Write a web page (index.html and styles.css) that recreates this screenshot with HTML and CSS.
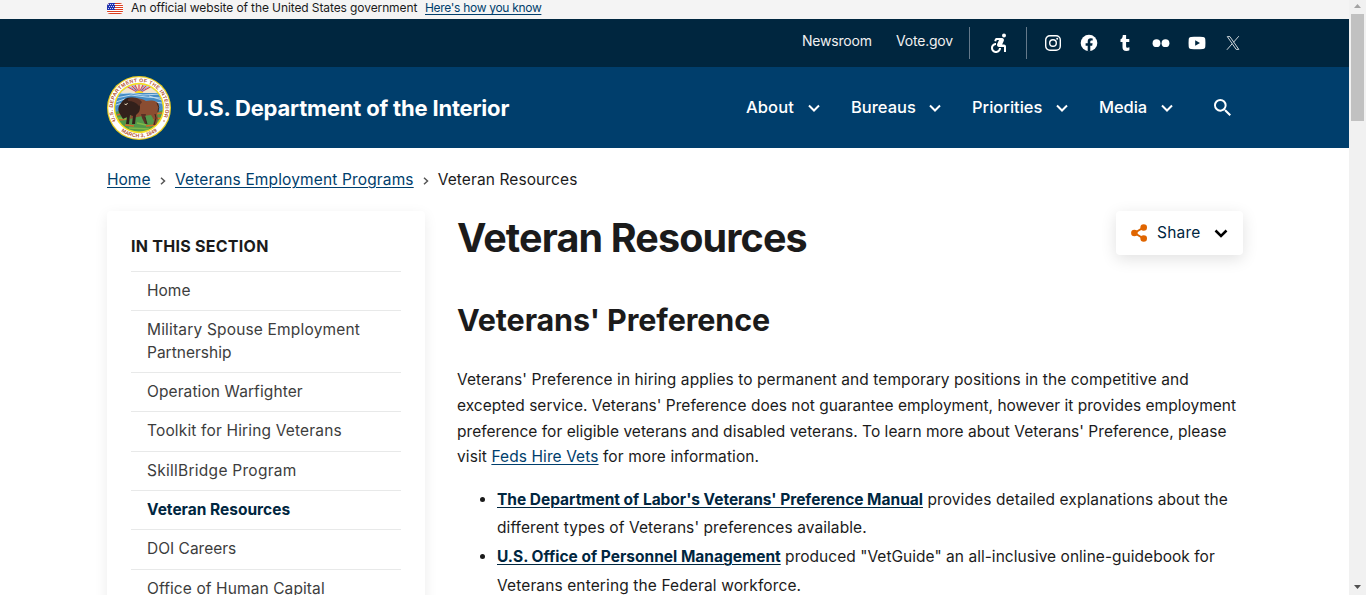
FILE: index.html
```html
<!DOCTYPE html>
<html lang="en">
<head>
<meta charset="utf-8">
<title>Veteran Resources | U.S. Department of the Interior</title>
<link rel="stylesheet" href="styles.css">
</head>
<body>
<div class="window">
<div class="page">
  <div class="banner">
    <svg class="flag" viewBox="0 0 16 11"><defs><clipPath id="flag-shape"><rect width="16" height="11" rx="3.500"/></clipPath></defs><g clip-path="url(#flag-shape)"><path fill="#fff" d="M0 0h16v11H0z"/><path stroke="#db3e1f" d="M0 .5h16M0 2.500h16M0 4.500h16M0 6.500h16M0 8.500h16M0 10.500h16"/><path fill="#1e33b1" d="M0 0h8v7H0z"/><path stroke="#fff" stroke-width=".8" stroke-dasharray="1 1" d="M1 1.500h7M2 3.500h6M1 5.500h7"/></g></svg>
    <span class="banner-text">An official website of the United States government</span>
    <a class="banner-link" href="#">Here's how you know</a>
  </div>
  <div class="topbar">
    <a class="top-link newsroom" href="#">Newsroom</a>
    <a class="top-link vote" href="#">Vote.gov</a>
    <div class="access"><svg width="24" height="24" viewBox="0 0 24 24" fill="#fff"><circle cx="18" cy="4.540" r="2"/><path d="M15 17h-2c0 1.650-1.350 3-3 3s-3-1.350-3-3 1.350-3 3-3v-2c-2.760 0-5 2.240-5 5s2.240 5 5 5 5-2.240 5-5zm3-3.500h-1.860l1.670-3.670C18.420 8.500 17.440 7 15.960 7h-5.200c-.81 0-1.540.47-1.870 1.200L8.220 10l1.920.53.65-1.530H13l-1.830 4.100c-.6 1.330.39 2.900 1.850 2.900H18v5h2v-5.500c0-1.100-.9-2-2-2z"/></svg></div>
    <div class="social">
      <svg viewBox="0 0 18 18"><g fill="none" stroke="#fff" stroke-width="1.400"><rect x="1.700" y="1.700" width="14.600" height="14.600" rx="4.200"/><circle cx="9" cy="9" r="3.300"/></g><circle cx="13.200" cy="4.800" r="1" fill="#fff"/></svg>
      <svg viewBox="0 0 18 18"><circle cx="9" cy="9" r="8.300" fill="#fff"/><path fill="#00263f" d="M7.700 17.400v-5.700H5.600V9.200h2.100V7.500c0-2.100 1.200-3.200 3.100-3.200l1.900.2v2.100h-1.100c-1 0-1.300.6-1.300 1.300v1.300h2.300l-.4 2.500h-1.900v5.700z"/></svg>
      <svg viewBox="0 0 18 18"><path fill="#fff" d="M6.800 1h3.300v3.900h3.200v3h-3.200v3.900c0 1.500.3 2 1.400 2 .6 0 1.300-.2 1.900-.5v3c-.8.5-1.800.7-3 .7-2.700 0-3.900-1.400-3.900-3.700V7.900h-2V5.300c1.700-.6 2.200-2 2.300-4.300z"/></svg>
      <svg viewBox="0 0 18 18"><circle cx="4.500" cy="9.200" r="3.900" fill="#fff"/><circle cx="13.500" cy="9.200" r="3.900" fill="#fff"/></svg>
      <svg viewBox="0 0 18 18"><path fill="#fff" d="M3 3c4-.5 8-.5 12 0 1.600.2 2.200 1 2.300 2.500.2 2.300.2 4.700 0 7-.1 1.500-.7 2.300-2.300 2.500-4 .4-8 .4-12 0C1.400 14.800.8 14 .7 12.500c-.2-2.300-.2-4.700 0-7C.8 4 1.400 3.200 3 3z"/><path fill="#00263f" d="M7.200 6.200v5.600L12 9z"/></svg>
      <svg viewBox="0 0 18 18"><g fill="none" stroke="#fff" stroke-width=".8"><path d="M3.300 2.600h2.600l8.900 12.800h-2.600z"/><path d="M14.800 2.200l-5.300 6.100M8.100 9.800l-5.200 6"/></g></svg>
    </div>
  </div>
  <header class="header">
    <svg class="seal" viewBox="0 0 64 64">
      <defs>
        <clipPath id="scene"><circle cx="32" cy="32" r="23.600"/></clipPath>
        <path id="arc-top" d="M8.700 44.500A26.300 26.300 0 1 1 55.300 44.500"/>
        <path id="arc-bottom" d="M6.500 46.500A29.300 29.300 0 0 0 57.500 46.500"/>
      </defs>
      <circle cx="32" cy="32" r="32" fill="#e8cd23"/><circle cx="32" cy="32" r="30.800" fill="#fff"/><circle cx="32" cy="32" r="25.200" fill="#f5df22"/>
      <g clip-path="url(#scene)">
        <path fill="#75a9dc" d="M8 8h48v32H8z"/><path fill="#f4e5ca" d="M8 8h48v9H8z"/>
        <path stroke="#d93e51" stroke-width="1.100" d="M32 17L17 9M32 17L22 7M32 17L27 7M32 17V7M32 17L37 7M32 17L42 7M32 17L47 9"/>
        <path stroke="#7ba6db" stroke-width="1" d="M32 17L19 8M32 17L25 7M32 17L39 7M32 17L45 8"/>
        <path fill="#f8dc20" d="M27.500 17q4.500-5 9 0z"/><path fill="#458cc4" d="M8 17h48v19H8z"/>
        <path stroke="#c5e0f3" stroke-width=".9" fill="none" d="M10 18l13-1 13 2 18-1M9 22l15-3 15 2 15 1M42 20l13 4M9 26l9-3M47 26l8 1M9 29l6-2"/>
        <path fill="#52984a" d="M8 36q12-4 24 0t24-2v22H8z"/>
        <path stroke="#d56c28" stroke-width="1.300" fill="none" d="M10 39l8-2M12 44l9-1M48 38l7-1M18 49l9 1M39 50l10-1M46 43l9-1"/>
        <path stroke="#80b947" stroke-width="1.300" fill="none" d="M11 42l10 1M22 52l20 1M30 47l9 2M47 46l7-2"/>
      </g>
      <path fill="#8b4d31" d="M26 24c5-3 9-1 13 1 5-1 11-1 13 4l-1 7-1 2 1 5-2 6h-3l1-5-3-5-8 1-6 1-7 2z"/>
      <path fill="#32201b" d="M12 30l2-3c3-5 9-7 15-4 4 4 5 8 3 13l-3 3-1 9h-3l1-8-3-1-1 9h-3l1-7-4 2-3-5c-2-3-2-5-1-8z"/>
      <path fill="#593125" d="M21 23q8-4 14 3l-3 4q-4-5-11-5zM34 38l5 0-1 4 2 6h-2l-3-6z"/>
      <path stroke="#32201b" stroke-width=".9" fill="none" d="M50 27q3 4 1 9M48 38l1 4-2 7M38 41l2 7"/>
      <path stroke="#e4d5ba" fill="none" d="M17.500 28q2 2 3-1"/>
      <text class="seal-text"><textPath href="#arc-top" textLength="104">U.S. DEPARTMENT OF THE INTERIOR</textPath></text>
      <text class="seal-text"><textPath href="#arc-bottom" startOffset="11.500" textLength="39">MARCH 3, 1849</textPath></text>
      <circle cx="7" cy="45" r=".7" fill="#b64b30"/><circle cx="57" cy="45" r=".7" fill="#b64b30"/>
    </svg>
    <a class="site-name" href="#">U.S. Department of the Interior</a>
    <nav class="nav">
      <a class="nav-item about" href="#"><span>About</span><svg viewBox="0 0 12 8"><path d="M1 1.500l5 5 5-5"/></svg></a>
      <a class="nav-item bureaus" href="#"><span>Bureaus</span><svg viewBox="0 0 12 8"><path d="M1 1.500l5 5 5-5"/></svg></a>
      <a class="nav-item priorities" href="#"><span>Priorities</span><svg viewBox="0 0 12 8"><path d="M1 1.500l5 5 5-5"/></svg></a>
      <a class="nav-item media" href="#"><span>Media</span><svg viewBox="0 0 12 8"><path d="M1 1.500l5 5 5-5"/></svg></a>
      <svg class="search" viewBox="3 3 17.500 17.500"><path fill="#fff" d="M15.500 14h-.79l-.28-.27A6.471 6.471 0 0 0 16 9.500 6.500 6.500 0 1 0 9.500 16c1.610 0 3.090-.59 4.230-1.570l.27.28v.79l5 4.990L20.490 19l-4.990-5zm-6 0C7.010 14 5 11.990 5 9.500S7.010 5 9.500 5 14 7.010 14 9.500 11.990 14 9.500 14z"/></svg>
    </nav>
  </header>
  <nav class="breadcrumb">
    <a class="bc-home" href="#">Home</a><svg viewBox="0 0 6 8"><path d="M1 .8L4.500 4 1 7.200"/></svg><a class="bc-programs" href="#">Veterans Employment Programs</a><svg viewBox="0 0 6 8"><path d="M1 .8L4.500 4 1 7.200"/></svg><span class="bc-current">Veteran Resources</span>
  </nav>
  <div class="content">
    <aside class="side">
      <h2 class="side-title">IN THIS SECTION</h2>
      <ul class="side-list">
        <li>Home</li>
        <li><span class="military">Military Spouse Employment</span><br>Partnership</li>
        <li class="warfighter">Operation Warfighter</li>
        <li class="toolkit">Toolkit for Hiring Veterans</li>
        <li class="skillbridge">SkillBridge Program</li>
        <li class="current">Veteran Resources</li>
        <li>DOI Careers</li>
        <li class="capital">Office of Human Capital</li>
      </ul>
    </aside>
    <main class="main">
      <div class="title-row">
        <h1>Veteran Resources</h1>
        <button class="share"><svg class="share-icon" viewBox="0 0 16 18"><path fill="none" stroke="#d96400" stroke-width="2" d="M12.500 3.500L3.500 9l9 5.500"/><g fill="#e06500"><circle cx="12.700" cy="3.500" r="3.300"/><circle cx="3.400" cy="9" r="3.300"/><circle cx="12.700" cy="14.500" r="3.300"/></g></svg><span>Share</span><svg class="share-chevron" viewBox="0 0 14 9"><path d="M1.500 1.500L7 7l5.500-5.500"/></svg></button>
      </div>
      <h2 class="section-title">Veterans' Preference</h2>
      <p class="intro"><span class="p1">Veterans' Preference in hiring applies to permanent and temporary positions in the competitive and</span><br><span class="p2">excepted service. Veterans' Preference does not guarantee employment, however it provides employment</span><br><span class="p3">preference for eligible veterans and disabled veterans. To learn more about Veterans' Preference, please</span><br><span class="p4">visit <a href="#">Feds Hire Vets</a> for more information.</span></p>
      <ul class="links">
        <li><a class="l1a" href="#">The Department of Labor's Veterans' Preference Manual</a><span class="l1b"> provides detailed explanations about the</span><br><span class="l2">different types of Veterans' preferences available.</span></li>
        <li><a class="l3a" href="#">U.S. Office of Personnel Management</a><span class="l3b"> produced "VetGuide" an all-inclusive online-guidebook for</span><br><span class="l4">Veterans entering the Federal workforce.</span></li>
      </ul>
    </main>
  </div>
</div>
<div class="scrollbar"><svg viewBox="0 0 17 14"><path fill="#a3a3a3" d="M5 8h7L8.500 4z"/></svg><div class="thumb"></div><svg class="down" viewBox="0 0 17 14"><path fill="#505050" d="M5 4h7L8.500 8z"/></svg></div>
</div>
</body>
</html>
```
FILE: styles.css
```css
* { box-sizing: border-box; }
body { margin: 0; font-family: Inter, "Liberation Sans", sans-serif; font-size: 15.5px; color: #1b1b1b; background: #fff; }
.window { display: flex; height: 595px; overflow: hidden; white-space: nowrap; }
.page { width: 1349px; height: 595px; overflow: hidden; }
a { color: #003e6c; text-underline-offset: 2px; text-decoration-thickness: 1px; }
ul { margin: 0; padding: 0; }
.banner { height: 19px; padding: 0 107px; display: flex; background: #f4f4f4; font-size: 12px; line-height: 15px; }
.flag { width: 16px; height: 11px; margin: 3px 8px 0 0; }
.banner-text { width: 294px; letter-spacing: -.1px; }
.banner-link { letter-spacing: -.31px; }
.topbar { height: 48px; padding-right: 107px; display: flex; justify-content: flex-end; align-items: center; background: #00263f; }
.top-link { color: #f0f0f0; text-decoration: none; font-size: 14px; padding-bottom: 5px; letter-spacing: -.2px; }
.newsroom { width: 94px; }
.vote { width: 73px; }
.access { width: 58px; height: 32px; display: flex; align-items: center; justify-content: center; border: solid #64798a; border-width: 0 1px; }
.social { display: flex; gap: 18px; padding-left: 17px; width: 215px; }
.social svg { width: 18px; height: 18px; flex: none; }
.header { height: 81px; padding-left: 107px; padding-right: 118px; display: flex; align-items: center; background: #003e6c; }
.seal { width: 64px; height: 64px; margin-right: 16px; }
.seal-text { font-family: "Liberation Sans", sans-serif; font-size: 5.2px; font-weight: bold; fill: #b45432; }
.site-name { color: #fff; text-decoration: none; font-weight: 700; font-size: 22px; letter-spacing: -.2px; }
.nav { margin-left: auto; display: flex; align-items: center; font-size: 16.5px; font-weight: 500; }
.nav-item { display: flex; justify-content: space-between; align-items: center; color: #fff; text-decoration: none; }
.nav-item span { padding-bottom: 2px; }
.nav-item svg { width: 12px; height: 8px; fill: none; stroke: #fff; stroke-width: 2; }
.about { width: 74px; margin-right: 31px; letter-spacing: .1px; }
.bureaus { width: 90px; margin-right: 31px; }
.priorities { width: 96px; margin-right: 31px; }
.media { width: 74px; margin-right: 41px; letter-spacing: -.1px; }
.search { width: 17px; height: 17px; }
.breadcrumb { height: 63px; padding-left: 107px; display: flex; align-items: center; }
.breadcrumb svg { width: 6px; height: 8px; margin: 2px 9px 0; fill: none; stroke: #555; stroke-width: 1.5; }
.bc-home { width: 44px; }
.bc-programs { letter-spacing: .14px; }
.bc-current { letter-spacing: .1px; }
.content { display: flex; padding: 0 106px 0 107px; }
.side { width: 318px; height: 420px; padding: 24px; margin-right: 32px; border-radius: 4px; box-shadow: 0 4px 14px rgba(0,0,0,.08); }
.side-title { margin: 0; height: 36.1px; font-size: 16px; line-height: 22px; font-weight: 700; letter-spacing: .27px; }
.side-list { list-style: none; }
.side-list li { border-top: 1px solid #e8e9e9; padding: 8px 16px; line-height: 22.33px; color: #3d3d3d; }
.side-list .current { font-weight: 700; color: #00263f; }
.military { letter-spacing: .18px; }
.warfighter, .capital { letter-spacing: .1px; }
.toolkit { letter-spacing: .16px; }
.skillbridge { letter-spacing: .27px; }
.main { width: 786px; }
.title-row { display: flex; justify-content: space-between; }
h1 { margin: 0; font-size: 39.5px; line-height: 54px; font-weight: 700; letter-spacing: -.87px; }
.share { width: 127px; height: 44px; border: 0; border-radius: 4px; background: #fff; box-shadow: 0 4px 16px rgba(0,0,0,.12); padding: 0 15px; display: flex; align-items: center; font: inherit; color: #00263f; }
.share-icon { width: 16px; height: 18px; margin-right: 10px; }
.share span { padding-bottom: 2px; letter-spacing: .2px; }
.share-chevron { width: 14px; height: 9px; margin-left: auto; fill: none; stroke: #000; stroke-width: 2.5; }
.section-title { margin: 36px 0 0; font-size: 30.5px; line-height: 38px; font-weight: 700; letter-spacing: -.12px; }
.intro { margin: 28px 0 0; line-height: 25.75px; }
.p1 { letter-spacing: .07px; }
.p2 { letter-spacing: .02px; }
.p3 { letter-spacing: .03px; }
.p4 { letter-spacing: .09px; }
.links { margin-top: 15.5px; padding-left: 40px; line-height: 28.7px; }
.links a { font-weight: 700; color: #00263f; }
.l1a { letter-spacing: -.02px; }
.l1b { letter-spacing: .1px; }
.l2 { letter-spacing: .08px; }
.l3b { letter-spacing: .03px; }
.l4 { letter-spacing: .12px; }
.scrollbar { width: 17px; background: #f1f1f1; display: flex; flex-direction: column; }
.scrollbar svg { width: 17px; height: 14px; flex: none; }
.thumb { width: 13px; height: 107px; margin-left: 2px; background: #c1c1c1; }
.scrollbar .down { margin-top: auto; }
```
